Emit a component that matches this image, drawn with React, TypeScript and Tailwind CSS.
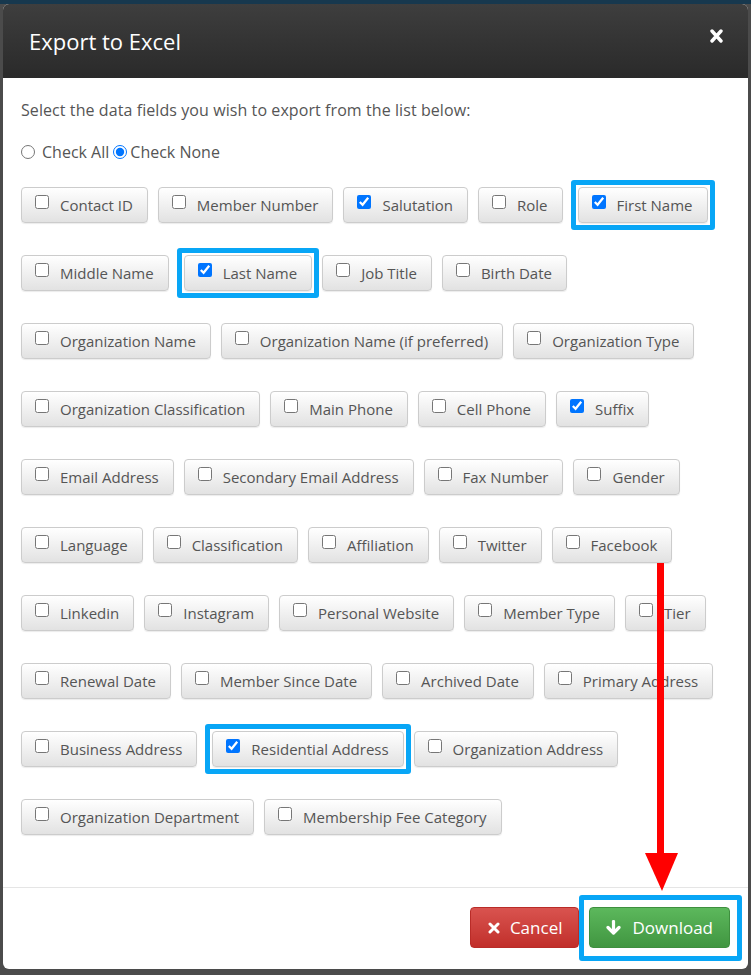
import React from 'react'

type Field = { name: string; checked?: boolean; marked?: boolean }

// rows are kept as in the dialog so the wrapping stays the same
const rows: Field[][] = [
  [
    { name: 'Contact ID' },
    { name: 'Member Number' },
    { name: 'Salutation', checked: true },
    { name: 'Role' },
    { name: 'First Name', checked: true, marked: true },
  ],
  [
    { name: 'Middle Name' },
    { name: 'Last Name', checked: true, marked: true },
    { name: 'Job Title' },
    { name: 'Birth Date' },
  ],
  [
    { name: 'Organization Name' },
    { name: 'Organization Name (if preferred)' },
    { name: 'Organization Type' },
  ],
  [
    { name: 'Organization Classification' },
    { name: 'Main Phone' },
    { name: 'Cell Phone' },
    { name: 'Suffix', checked: true },
  ],
  [
    { name: 'Email Address' },
    { name: 'Secondary Email Address' },
    { name: 'Fax Number' },
    { name: 'Gender' },
  ],
  [
    { name: 'Language' },
    { name: 'Classification' },
    { name: 'Affiliation' },
    { name: 'Twitter' },
    { name: 'Facebook' },
  ],
  [
    { name: 'Linkedin' },
    { name: 'Instagram' },
    { name: 'Personal Website' },
    { name: 'Member Type' },
    { name: 'Tier' },
  ],
  [
    { name: 'Renewal Date' },
    { name: 'Member Since Date' },
    { name: 'Archived Date' },
    { name: 'Primary Address' },
  ],
  [
    { name: 'Business Address' },
    { name: 'Residential Address', checked: true, marked: true },
    { name: 'Organization Address' },
  ],
  [{ name: 'Organization Department' }, { name: 'Membership Fee Category' }],
]

function FieldButton({ field }: { field: Field }) {
  return (
    <div className={field.marked ? 'relative ml-[5px]' : 'relative'}>
      <label className="flex items-start pl-[13px] pr-[14px] py-[7px] border border-[#cccccc] rounded-[4px] bg-gradient-to-b from-white to-[#e2e2e2] shadow-[0_1px_1px_rgba(0,0,0,0.08)] text-[15px] leading-[20px] text-[#555555] whitespace-nowrap">
        <input
          type="checkbox"
          readOnly
          checked={!!field.checked}
          className="w-[14px] h-[14px] m-0 mr-[11px] accent-[#0075ff]"
        />
        {field.name}
      </label>
      {field.marked && (
        <span className="absolute -inset-[7px] border-[5px] border-[#08a6f6] rounded-[3px] pointer-events-none" />
      )}
    </div>
  )
}

export default function App() {
  return (
    <div
      className="relative w-[751px] h-[975px] bg-[#4b4b4b] overflow-hidden"
      style={{ fontFamily: '"Open Sans", "Noto Sans", sans-serif' }}
    >
      <div className="h-[4px] bg-[#17384e]" />
      <div className="mx-[3px] h-[965px] bg-white rounded-[6px] flex flex-col overflow-hidden">
        {/* Header */}
        <div className="h-[74px] shrink-0 flex items-center justify-between pl-[26px] pr-[25px] bg-gradient-to-b from-[#3e3e3e] to-[#2a2a2a]">
          <span className="text-[22px] text-white">Export to Excel</span>
          <svg width="13" height="14" viewBox="0 0 13 14" className="mt-[-10px]">
            <path d="M2 2L11 12M11 2L2 12" stroke="white" strokeWidth="3.4" strokeLinecap="round" />
          </svg>
        </div>

        {/* Body */}
        <div className="flex-1 pl-[18px] pt-[21px] text-[#555555]">
          <p className="text-[16px] leading-[22px] tracking-[0.08px]">
            Select the data fields you wish to export from the list below:
          </p>
          <div className="flex items-center mt-[20px] text-[16px] leading-[22px]">
            <input type="radio" readOnly name="chk" className="w-[14px] h-[14px] m-0 mr-[7px]" />
            <span className="mr-[4px]">Check All</span>
            <input type="radio" readOnly checked name="chk" className="w-[14px] h-[14px] m-0 mr-[3px] accent-[#0075ff]" />
            <span>Check None</span>
          </div>
          <div className="flex flex-col gap-[32px] mt-[24px]">
            {rows.map((row, i) => (
              <div key={i} className="flex gap-[10px]">
                {row.map((f) => (
                  <FieldButton key={f.name} field={f} />
                ))}
              </div>
            ))}
          </div>
        </div>

        {/* Footer */}
        <div className="h-[82px] shrink-0 border-t border-[#e5e5e5] flex items-center justify-end pr-[18px] pb-[2px]">
          <button className="h-[41px] flex items-center gap-[10px] pl-[17px] pr-[16px] rounded-[4px] border border-[#b92c28] bg-gradient-to-b from-[#d9534f] to-[#c12e2a] text-white text-[17px]">
            <svg width="12" height="12" viewBox="0 0 12 12">
              <path d="M2 2L10 10M10 2L2 10" stroke="white" strokeWidth="3" strokeLinecap="round" />
            </svg>
            Cancel
          </button>
          <div className="relative ml-[10px]">
            <button className="h-[41px] flex items-center gap-[11px] px-[16px] rounded-[4px] border border-[#3e8f3e] bg-gradient-to-b from-[#5cb85c] to-[#419641] text-white text-[17px]">
              <svg width="15" height="15" viewBox="0 0 15 15">
                <path d="M7.5 1.5V12" stroke="white" strokeWidth="3.2" strokeLinecap="round" />
                <path d="M2 7.5L7.5 13L13 7.5" stroke="white" strokeWidth="3.2" fill="none" strokeLinecap="round" strokeLinejoin="round" />
              </svg>
              Download
            </button>
            <span className="absolute -left-[10px] -right-[12px] -top-[12px] -bottom-[13px] border-[5px] border-[#08a6f6] rounded-[3px] pointer-events-none" />
          </div>
        </div>
      </div>

      {/* red annotation arrow */}
      <svg className="absolute left-0 top-0 pointer-events-none" width="751" height="975">
        <rect x="657" y="563" width="7" height="293" fill="#ff0000" />
        <polygon points="645,853 678,853 662,891" fill="#ff0000" />
      </svg>
    </div>
  )
}
